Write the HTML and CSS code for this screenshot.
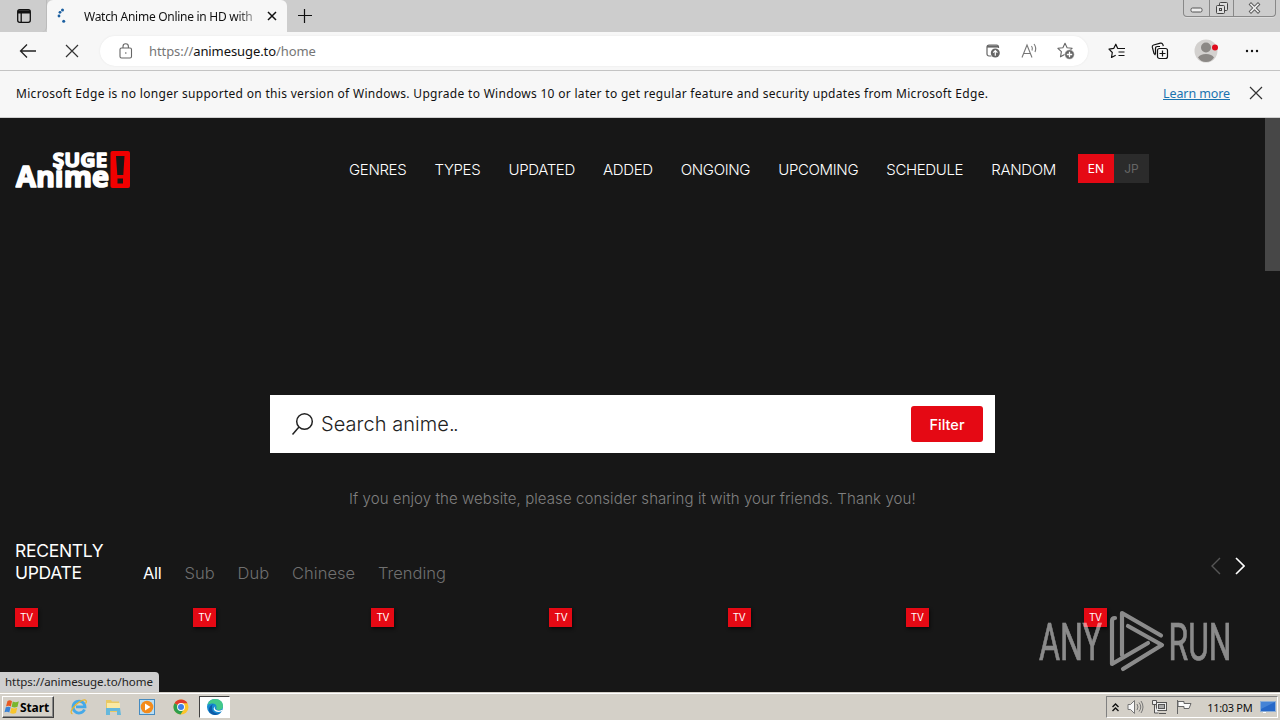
FILE: index.html
```html
<!DOCTYPE html>
<html lang="en">
<head>
  <meta charset="UTF-8">
  <title>Watch Anime Online in HD with English Subbed, Dubbed</title>
  <link rel="stylesheet" href="styles.css">
</head>
<body>

  <div class="tabstrip">
    <div class="tab-actions">
      <svg width="16" height="16" viewBox="0 0 16 16" fill="none" stroke="#111" stroke-width="1.3">
        <rect x="1.7" y="1.7" width="12.6" height="12.6" rx="2"/>
        <path d="M2 3.2h12M5.2 5v9" /><path d="M2 4h12" stroke-width="3"/>
      </svg>
    </div>
    <div class="tab">
      <svg class="spinner" width="16" height="16" viewBox="0 0 16 16" fill="#1b5fa0">
        <circle cx="6.5" cy="2" r="1.5"/><circle cx="4" cy="4.3" r="1.4"/><circle cx="3" cy="8" r="1.4"/>
        <circle cx="7.7" cy="13.3" r="1.5"/>
      </svg>
      <span class="tab-title">Watch Anime Online in HD with</span>
      <svg width="12" height="12" viewBox="0 0 12 12" stroke="#111" stroke-width="1.5"><path d="M2 2l8 8M10 2l-8 8"/></svg>
    </div>
    <svg class="new-tab" width="16" height="16" viewBox="0 0 16 16" stroke="#111" stroke-width="1.2"><path d="M1 7.500h14M7.500 1v14"/></svg>
    <div class="window-btns">
      <span class="win-min"><svg width="13" height="6" viewBox="0 0 13 6"><rect x="1" y="1" width="11" height="4" rx="1.5" fill="#eee" stroke="#555"/></svg></span>
      <span class="win-max"><svg width="14" height="14" viewBox="0 0 14 14" fill="#ddd" stroke="#444"><rect x="4.5" y="1.5" width="8" height="8" rx="1"/><rect x="1.5" y="4.5" width="8" height="8" rx="1"/><rect x="4.5" y="7.5" width="2" height="2"/></svg></span>
      <span class="win-close"><svg width="13" height="12" viewBox="0 0 13 12" stroke-linecap="square"><path d="M3 2.5l7 7M10 2.5l-7 7" stroke="#555" stroke-width="3.4"/><path d="M3 2.5l7 7M10 2.5l-7 7" stroke="#eee" stroke-width="1.7"/></svg></span>
    </div>
  </div>

  <div class="toolbar">
    <svg class="back" width="18" height="16" viewBox="0 0 18 16" fill="none" stroke="#222" stroke-width="1.3"><path d="M17 8H1.5M8 1.5L1.5 8 8 14.5"/></svg>
    <svg class="stop" width="14" height="14" viewBox="0 0 14 14" stroke="#333" stroke-width="1.2"><path d="M1 1l12 12M13 1L1 13"/></svg>
    <div class="address">
      <svg class="lock" width="14" height="16" viewBox="0 0 14 16" fill="none" stroke="#666" stroke-width="1.1"><rect x="1" y="5" width="11.5" height="10" rx="1.5"/><path d="M4 5V3.500a2.700 2.700 0 0 1 5.400 0V5"/><circle cx="6.800" cy="10" r=".8" fill="#666" stroke="none"/></svg>
      <span class="url">https://<b>animesuge.to</b>/home</span>
      <svg class="app" width="15" height="15" viewBox="0 0 15 15" fill="none" stroke="#666" stroke-width="1.2"><path d="M5.500 12H3a2 2 0 0 1-2-2V3a2 2 0 0 1 2-2h7.500a2 2 0 0 1 2 2v1"/><path d="M1 2.500h11" stroke-width="2.200"/><circle cx="9.300" cy="9" r="4.500" fill="#666" stroke="none"/><path d="M9.300 11.700V7M7.200 8.700l2.100-2.100 2.100 2.100" stroke="#fff"/></svg>
      <svg class="read" width="18" height="16" viewBox="0 0 18 16" fill="none" stroke="#777" stroke-width="1.1"><path d="M1 14.500L6 2l5 12.500M2.700 10.500h6.600M10.500 3q1.500 2 .5 4.500M13 1q2.800 3.500 1 8"/></svg>
      <svg class="fav" width="18" height="18" viewBox="0 0 18 18" fill="none" stroke="#666" stroke-width="1.100" stroke-linejoin="round"><path d="M8 1.200l2.100 4.500 5 .6-3.700 3.400 .9 5-4.300-2.400-4.500 2.500 .9-5.100L.9 6.300l5-.6z"/><circle cx="12.500" cy="12.500" r="4.800" fill="#666" stroke="#fff" stroke-width=".6"/><path d="M12.500 9.800v5.400M9.800 12.500h5.400" stroke="#fff" stroke-width="1.300"/></svg>
    </div>
    <svg class="favlist" width="18" height="16" viewBox="0 0 18 16" fill="none" stroke="#111" stroke-width="1.200" stroke-linejoin="round"><path d="M10 5.300H9.600L7.800 1.200 5.700 5.400 1 6.100l3.300 3.400-.8 5 4.200-2.200M10 5.500h7M10.500 9h6M10.500 12.500h6"/></svg>
    <svg class="collections" width="18" height="18" viewBox="0 0 18 18" fill="none" stroke="#111" stroke-width="1.200"><rect x="6.500" y="6.500" width="10" height="10" rx="2"/><path d="M11.500 8.500v6M8.500 11.500h6M4.500 13L3 11.500 1.300 5.200Q1 3.500 2.600 3l6.800-1.800q1.800-.4 2.400 1.200l.5 1.800M4.500 12V6.500q0-2 2-2H9"/></svg>
    <svg class="avatar" width="24" height="24" viewBox="0 0 24 24"><circle cx="12" cy="12" r="11.500" fill="#d3d1cf"/><circle cx="12" cy="8.500" r="5" fill="#8b8885"/><path d="M4 18.500q2-3.500 8-3.500t8 3.500q-3 4.500-8 4.500t-8-4.500z" fill="#8b8885"/><circle cx="21" cy="8.500" r="3" fill="#e00b1c"/></svg>
    <svg class="more" width="14" height="4" viewBox="0 0 14 4" fill="#111"><circle cx="2" cy="2" r="1.200"/><circle cx="7" cy="2" r="1.200"/><circle cx="12" cy="2" r="1.200"/></svg>
  </div>

  <div class="infobar">
    <span class="info-text">Microsoft Edge is no longer supported on this version of Windows. Upgrade to Windows 10 or later to get regular feature and security updates from Microsoft Edge.</span>
    <a class="learn" href="#">Learn more</a>
    <svg width="14" height="14" viewBox="0 0 14 14" stroke="#333" stroke-width="1.200"><path d="M1 1l12 12M13 1L1 13"/></svg>
  </div>

  <div class="page">
    <div class="content">
      <header>
        <svg class="logo" width="116" height="38" viewBox="0 0 116 38">
          <g fill="#fff" stroke="#fff" stroke-linejoin="round">
            <text x="37.500" y="16" font-size="20" textLength="55" lengthAdjust="spacingAndGlyphs" stroke-width="1.300">SUGE</text>
            <text x="1" y="35.500" font-size="28" textLength="93" lengthAdjust="spacingAndGlyphs" stroke-width="1.600">Anime</text>
          </g>
          <rect x="95.500" y="0" width="19.500" height="37" rx="2" fill="#f00000"/>
          <path d="M101 5h8.500l-1.200 19h-6zM102.500 27.500h5.500v5h-5.500z" fill="#171717"/>
        </svg>
        <nav>
          <a>GENRES</a><a>TYPES</a><a>UPDATED</a><a>ADDED</a><a>ONGOING</a><a>UPCOMING</a><a>SCHEDULE</a><a>RANDOM</a>
        </nav>
        <div class="lang"><span class="active">EN</span><span>JP</span></div>
      </header>

      <div class="search">
        <svg width="24" height="24" viewBox="0 0 24 24" fill="none" stroke="#222" stroke-width="1.500"><circle cx="14.500" cy="9.500" r="7.800"/><path d="M9 15L2.500 22.500"/></svg>
        <span class="placeholder">Search anime<span class="dots">..</span></span>
        <button class="filter">Filter</button>
      </div>
      <p class="share">If you enjoy the website, please consider sharing it with your friends. Thank you!</p>

      <div class="section-head">
        <h2>RECENTLY UPDATE</h2>
        <div class="tabs">
          <span class="active">All</span><span>Sub</span><span>Dub</span><span>Chinese</span><span>Trending</span>
        </div>
        <div class="paging">
          <svg width="10" height="18" viewBox="0 0 10 18" fill="none" stroke="#555" stroke-width="1.400"><path d="M9 1L1 9l8 8"/></svg>
          <svg width="10" height="18" viewBox="0 0 10 18" fill="none" stroke="#fff" stroke-width="1.600"><path d="M1 1l8 8-8 8"/></svg>
        </div>
      </div>
      <div class="items">
        <div><span class="type">TV</span></div>
        <div><span class="type">TV</span></div>
        <div><span class="type">TV</span></div>
        <div><span class="type">TV</span></div>
        <div><span class="type">TV</span></div>
        <div><span class="type">TV</span></div>
        <div><span class="type">TV</span></div>
      </div>
    </div>
    <div class="scrollbar"><div class="thumb"></div></div>

    <svg class="watermark" width="194" height="64" viewBox="0 0 194 64">
      <g fill="#fff" stroke="#fff" stroke-width=".7">
        <text x="1" y="50.500" font-size="52" textLength="63" lengthAdjust="spacingAndGlyphs">ANY</text>
        <text x="130.500" y="50.500" font-size="52" textLength="63" lengthAdjust="spacingAndGlyphs">RUN</text>
      </g>
      <g fill="none" stroke="#fff" stroke-width="4.200" stroke-linecap="round" stroke-linejoin="round">
        <path d="M84 46V4L123 26.500"/>
        <path d="M77 9Q74 9 74 12V55L110 34"/>
        <path d="M90 17L124 36 85 60"/>
      </g>
    </svg>
    <div class="status">https://animesuge.to/home</div>
  </div>

  <div class="taskbar">
    <div class="start">
      <svg width="16" height="16" viewBox="0 0 16 16"><path d="M3.500 2Q6 .5 8 2.200L6.800 7.500Q4.500 6 2 7.500z" fill="#e85a22"/><path d="M8.800 2.500Q11.500 4 14.800 2.300L13.500 7.800Q10.500 9.300 7.600 7.800z" fill="#79b62f"/><path d="M1.800 8.300Q4.400 7 6.600 8.300L5.300 13.500Q3 12 .5 13.300z" fill="#3a83d6"/><path d="M7.400 8.800Q10 10.200 13.200 8.700L12 14Q9 15.500 6.100 14z" fill="#f8c52c"/></svg>
      Start
    </div>
    <div class="quick">
      <svg width="18" height="18" viewBox="0 0 18 18" fill="none"><path d="M14.500 11.500A6 6 0 1 1 15 8.800H6" stroke="#45a9e8" stroke-width="2.800"/><path d="M2.500 16Q-1.500 14 6 6.500 14 0 16 2.500q.8 1-.5 3" stroke="#e8b52a" stroke-width="1.200"/></svg>
      <svg width="18" height="18" viewBox="0 0 18 18"><path d="M2 2h5l1 1.500h7V14H2z" fill="#e9c964"/><path d="M3 5h13v8H3z" fill="#fbe9a3"/><path d="M2 10h14l1 7h-4v-4H6v4H2z" fill="#65b8dc"/></svg>
      <svg width="18" height="18" viewBox="0 0 18 18"><rect x="1.500" y="1.500" width="15" height="15" fill="#b9def5" stroke="#468bc0"/><circle cx="9" cy="9" r="6.300" fill="#f38b1c"/><path d="M7 5.500v7L12.500 9z" fill="#fff"/></svg>
      <svg width="18" height="18" viewBox="0 0 18 18"><circle cx="9" cy="9" r="7.500" fill="#fcc52b"/><path d="M9 9L2.500 5.200A7.500 7.500 0 0 1 15.500 5.200H9z" fill="#e03b2e"/><path d="M2.500 5.200A7.500 7.500 0 0 0 8.500 16.500L12 11 9 9z" fill="#2d9e4e"/><circle cx="9" cy="9" r="3.900" fill="#fff"/><circle cx="9" cy="9" r="3" fill="#3f7fe8"/></svg>
    </div>
    <div class="task-active">
      <svg width="18" height="18" viewBox="0 0 18 18"><circle cx="9" cy="9" r="8" fill="#168bd2"/><path d="M1.500 7Q3 1 9 1q8 .3 8 7 0 4-4.500 4-3 0-2-2.500Q11 6 7 5.500 3.500 5 1.500 7z" fill="#43c98a"/><path d="M6 9q-1 5 5 6.500 2.500.3 4.500-1.500-3 4-8 2.800Q2 15 3 10.500 4 6.500 8.500 6 5.500 7 6 9z" fill="#0d5ba8"/><path d="M9.500 8q-2 2.200.5 4 3 1.500 6-.3l.5 1q-4 2.500-7.500.3-3-2.500.5-5z" fill="#fff"/></svg>
    </div>
    <div class="tray">
      <svg width="7" height="9" viewBox="0 0 7 9" fill="none" stroke="#111" stroke-width="1.400"><path d="M.5 4l3-3 3 3M.5 8l3-3 3 3"/></svg>
      <svg width="17" height="16" viewBox="0 0 17 16" fill="none" stroke="#777"><path d="M1 5.500h2.500l4-4v13l-4-4H1z" fill="#f8f8f8"/><path d="M10 5q2 3 0 6M12 3.500q3.500 4.500 0 9M14 2q4 6 0 12"/></svg>
      <svg width="17" height="16" viewBox="0 0 17 16" fill="#eee" stroke="#555"><rect x="5.500" y="3.500" width="10" height="8"/><rect x="7.500" y="5.500" width="6" height="4" fill="#aaa"/><path d="M8 14.500h7M1.500 1.500h4v4h-4zM3.500 6v8h4" /></svg>
      <svg width="17" height="16" viewBox="0 0 17 16" fill="#fafafa" stroke="#666"><path d="M1.500 1v14M2 2.500h6v2h7l-2 5H8v-2H2z"/></svg>
      <span class="clock">11:03 PM</span>
      <svg width="16" height="14" viewBox="0 0 16 14"><rect x=".5" y="1.500" width="15" height="10" fill="#2768c8" stroke="#8daed6"/><path d="M1 2h14L1 9z" fill="#4583d6"/><path d="M3 12.500h3" stroke="#fff"/></svg>
    </div>
  </div>

</body>
</html>
```
FILE: styles.css
```css
* {
  box-sizing: border-box;
}

body {
  margin: 0;
  width: 1280px;
  height: 720px;
  overflow: hidden;
  display: flex;
  flex-direction: column;
  font-family: "Noto Sans", "Open Sans", sans-serif;
  font-size: 12px;
  color: #111;
}

svg {
  display: block;
  flex: none;
}

/* browser */
.tabstrip {
  height: 32px;
  flex: none;
  background: #cdcdcd;
  display: flex;
  align-items: flex-start;
}

.tab-actions {
  width: 47px;
  height: 32px;
  padding: 8px 0 0 16px;
  border-bottom-right-radius: 5px;
  border-right: 1px solid #bbb;
}

.tab {
  width: 240px;
  height: 32px;
  padding: 0 9px 0 9px;
  display: flex;
  align-items: center;
  background: #f7f7f7;
  border-radius: 6px 6px 0 0;
}

.tab-title {
  flex: 1;
  margin-left: 12px;
  white-space: nowrap;
  letter-spacing: -0.28px;
  background: linear-gradient(to right, #111 152px, #aaa 172px);
  -webkit-background-clip: text;
  color: transparent;
}

.new-tab {
  margin: 8px 0 0 10px;
}

.window-btns {
  margin: 0 4px 0 auto;
  width: 93px;
  height: 17px;
  display: flex;
  border: 1px solid #888;
  border-top: 0;
  border-radius: 0 0 4px 4px;
  box-shadow: 0 1px #dcdcdc;
}

.window-btns span {
  display: flex;
  justify-content: center;
  align-items: center;
}

.win-min {
  width: 25px;
  padding-top: 4px;
}

.win-max {
  width: 25px;
  border-left: 1px solid #888;
  border-right: 1px solid #888;
}

.win-close {
  flex: 1;
}

.toolbar {
  height: 39px;
  flex: none;
  padding: 0 21px 0 19px;
  display: flex;
  align-items: center;
  background: #f7f7f7;
  border-bottom: 1px solid #c4c4c4;
}

.stop {
  margin-left: 28px;
}

.address {
  margin-left: 21px;
  width: 988px;
  height: 30px;
  padding: 0 13px 0 19px;
  display: flex;
  align-items: center;
  background: #fff;
  border-radius: 15px;
  box-shadow: 0 0 2px #e4e4e4;
}

.url {
  flex: 1;
  margin-left: 16px;
  font-size: 13px;
  letter-spacing: -0.08px;
  color: #767676;
}

.url b {
  font-weight: 400;
  color: #111;
}

.read {
  margin-left: 20px;
}

.fav {
  margin-left: 18px;
}

.favlist {
  margin-left: 20px;
}

.collections {
  margin-left: 25px;
}

.avatar {
  margin-left: 25px;
}

.more {
  margin-left: auto;
}

.infobar {
  height: 47px;
  flex: none;
  padding: 0 17px 2px 16px;
  display: flex;
  align-items: center;
  background: #f7f7f7;
  border-bottom: 1px solid #d0d0d0;
}

.info-text {
  flex: 1;
  white-space: nowrap;
  letter-spacing: 0.305px;
}

.learn {
  margin-right: 19px;
  font-size: 12.5px;
  letter-spacing: -0.1px;
  color: #1a73b0;
}

/* site */
.page {
  position: relative;
  height: 574px;
  flex: none;
  display: flex;
  background: #171717;
  color: #fff;
  font-family: Inter, Roboto, sans-serif;
}

.content {
  width: 1265px;
  padding: 0 15px;
}

header {
  height: 103px;
  display: flex;
  align-items: center;
}

.logo {
  font-family: "Open Sans", "Noto Sans", sans-serif;
  font-weight: 700;
}

nav {
  margin-left: 218px;
  width: 707px;
  display: flex;
  justify-content: space-between;
  font-size: 15px;
  font-weight: 300;
  letter-spacing: -0.35px;
  color: #fff;
}

.lang {
  margin: -2px 0 0 22px;
  display: flex;
  font-size: 12px;
  line-height: 29px;
  text-align: center;
  color: #666;
}

.lang span {
  width: 35px;
  background: #2b2b2b;
}

.lang .active {
  width: 36px;
  background: #e50914;
  color: #fff;
}

.search {
  margin: 174px 0 0 255px;
  width: 725px;
  height: 58px;
  padding: 0 12px 0 20px;
  display: flex;
  align-items: center;
  background: #fff;
}

.placeholder {
  flex: 1;
  margin-left: 7px;
  font-size: 20px;
  font-weight: 300;
  letter-spacing: 0.05px;
  color: #222;
}

.dots {
  letter-spacing: -1.5px;
}

.filter {
  width: 72px;
  height: 36px;
  padding: 0;
  border: 0;
  border-radius: 3px;
  background: #e50914;
  color: #fff;
  font: 500 14.5px Inter, sans-serif;
}

.share {
  margin: 36px 0 0 334px;
  font-size: 15px;
  line-height: 20px;
  font-weight: 300;
  letter-spacing: 0.077px;
  color: #808080;
  white-space: nowrap;
}

.section-head {
  margin-top: 31px;
  height: 46px;
  display: flex;
}

h2 {
  margin: 0;
  width: 128px;
  padding-right: 20px;
  font-size: 17.5px;
  line-height: 22px;
  font-weight: 400;
  letter-spacing: -0.3px;
}

.tabs {
  display: flex;
  align-items: flex-end;
  gap: 23px;
  font-size: 16.5px;
  line-height: 26px;
  font-weight: 300;
  color: #707070;
}

.tabs .active {
  color: #fff;
  font-weight: 400;
  letter-spacing: -0.3px;
}

.paging {
  margin: 17px 5px 0 auto;
  display: flex;
  gap: 14px;
}

.items {
  margin: 22px -12px 0 0;
  display: grid;
  grid-template-columns: repeat(7, 1fr);
}

.type {
  display: block;
  width: 23px;
  height: 19px;
  background: #e50914;
  box-shadow: 1px 2px 3px #0a0a0a;
  font-size: 10px;
  line-height: 19px;
  letter-spacing: -0.3px;
  text-align: center;
}

.scrollbar {
  width: 15px;
}

.thumb {
  height: 153px;
  background: #474747;
}

.watermark {
  position: absolute;
  left: 1038px;
  top: 491px;
  opacity: 0.5;
  font-family: Roboto, sans-serif;
}

.status {
  position: absolute;
  left: 0;
  bottom: 0;
  width: 159px;
  height: 20px;
  padding-left: 5px;
  line-height: 20px;
  background: #cfcfcf;
  border-top-right-radius: 4px;
  font-family: "Noto Sans", sans-serif;
  font-size: 11.5px;
  letter-spacing: -0.06px;
  color: #222;
}

/* taskbar */
.taskbar {
  height: 28px;
  padding: 3px 2px 3px;
  display: flex;
  background: #d4d0c8;
  border-top: 1px solid #d4d0c8;
  box-shadow: inset 0 1px #fff;
}

.start {
  width: 52px;
  height: 22px;
  padding-left: 1px;
  display: flex;
  align-items: center;
  gap: 0;
  border: 1px solid;
  border-color: #fff #404040 #404040 #fff;
  box-shadow: inset -1px -1px #888;
  font-weight: 700;
  letter-spacing: -0.1px;
  color: #000;
}

.quick {
  margin-left: 16px;
  display: flex;
  align-items: center;
  gap: 16px;
}

.task-active {
  margin-left: 9px;
  width: 31px;
  height: 22px;
  display: flex;
  justify-content: center;
  align-items: center;
  background: #fff;
  border: 1px solid;
  border-color: #404040 #fff #fff #404040;
}

.tray {
  margin-left: auto;
  width: 172px;
  height: 22px;
  padding: 0 1px 0 5px;
  display: flex;
  align-items: center;
  justify-content: space-between;
  border: 1px solid;
  border-color: #808080 #fff #fff #808080;
}

.clock {
  margin-left: 7px;
  font-size: 11px;
  letter-spacing: -0.3px;
}
```
